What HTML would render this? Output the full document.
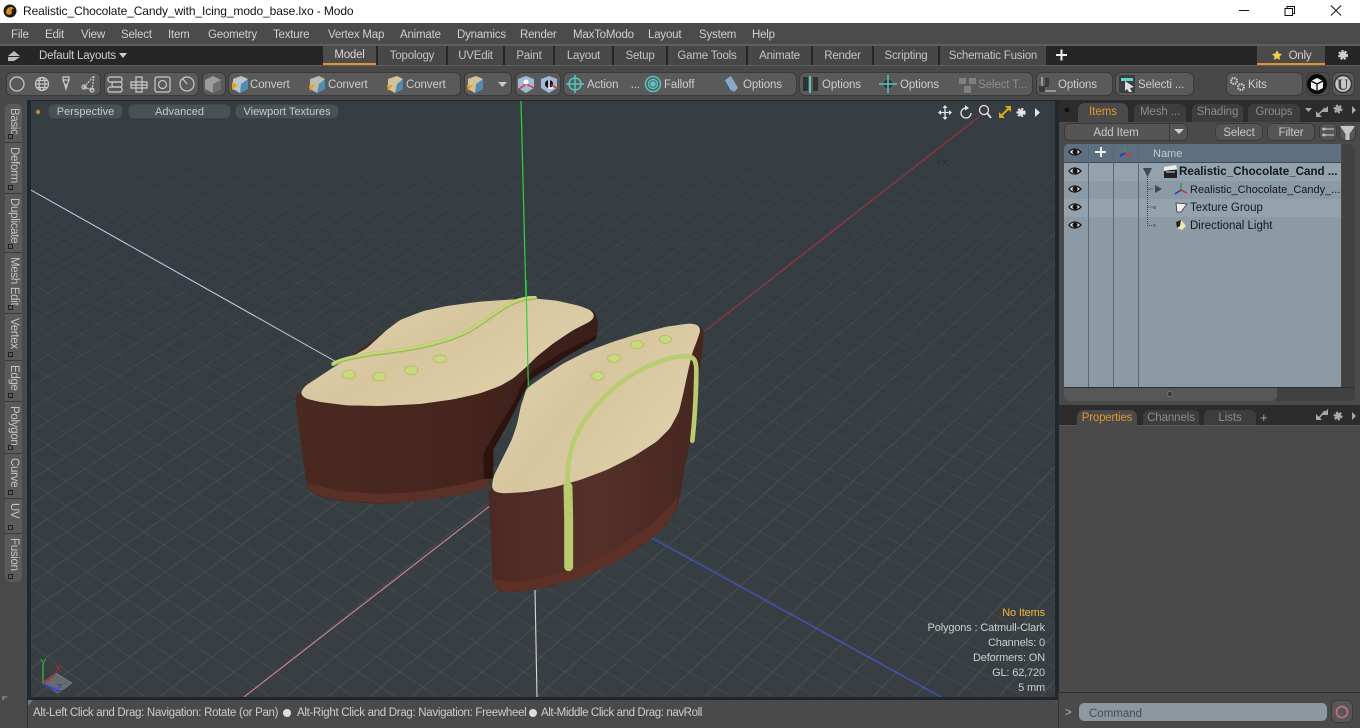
<!DOCTYPE html>
<html><head><meta charset="utf-8"><title>Modo</title>
<style>
html,body{margin:0;padding:0;background:#484848}
body{width:1360px;height:728px;overflow:hidden;position:relative;font-family:"Liberation Sans",sans-serif;font-size:11.5px;color:#c8c8c8}
.b{position:absolute}
.t{position:absolute;white-space:nowrap;line-height:14px}
.g{position:absolute;top:72px;height:22px;background:#5a5a5a;border:1px solid #3a3a3a;border-radius:6px;box-sizing:content-box}
.m{top:27.500px;color:#cfcfcf;letter-spacing:-.2px}
.tab{position:absolute;top:46px;height:19px;background:#474747;text-align:center;line-height:20px;color:#c4c4c4;letter-spacing:-.2px}
.tb{top:78px;color:#cdcdcd;font-size:11.5px;letter-spacing:-.1px}
.side{position:absolute;left:5px;width:17px;background:#5a5a5a;border-bottom:1px solid #3b3b3b}
.side span{position:absolute;left:1px;top:4px;writing-mode:vertical-rl;font-size:11.5px;line-height:15px;color:#c4c4c4;white-space:nowrap;letter-spacing:-.3px}
.side i{position:absolute;left:3px;bottom:3px;width:3px;height:3px;border:1px solid #222}
.pill{position:absolute;top:104px;height:15px;background:#495154;border:1px solid #3f4649;border-radius:6px;text-align:center;line-height:14px;color:#c6c9ca;box-sizing:border-box;font-size:11px}
.rt{position:absolute;height:18px;background:#3d3d3d;border-radius:6px 6px 0 0;text-align:center;line-height:17px;color:#8b8b8b;letter-spacing:-.1px}
.btn{position:absolute;top:123px;height:18px;background:#555;border:1px solid #3a3a3a;border-radius:6px;text-align:center;line-height:18px;box-sizing:border-box;color:#c8c8c8;letter-spacing:-.1px}
.hud{position:absolute;right:315px;white-space:nowrap;line-height:14px;color:#cdd0d1;font-size:11px;letter-spacing:-.15px}
.row{position:absolute;left:1064px;width:277px;height:18px}
.n{position:absolute;white-space:nowrap;color:#15181b;font-size:11.5px;line-height:14px}
.st{top:706px;color:#cdcdcd;letter-spacing:-.3px}
</style></head><body>

<!-- title bar -->
<div class="b" style="left:0;top:0;width:1360px;height:23px;background:#fff"></div>
<div class="t" style="left:23px;top:4px;font-size:12px;color:#111;line-height:15px;letter-spacing:-.1px">Realistic_Chocolate_Candy_with_Icing_modo_base.lxo - Modo</div>

<!-- menu bar -->
<div class="b" style="left:0;top:23px;width:1360px;height:22px;background:#4b4b4b"></div>
<div class="t m" style="left:11px">File</div><div class="t m" style="left:45px">Edit</div><div class="t m" style="left:81px">View</div><div class="t m" style="left:121px">Select</div><div class="t m" style="left:168px">Item</div><div class="t m" style="left:208px">Geometry</div><div class="t m" style="left:273px">Texture</div><div class="t m" style="left:328px">Vertex Map</div><div class="t m" style="left:400px">Animate</div><div class="t m" style="left:457px">Dynamics</div><div class="t m" style="left:520px">Render</div><div class="t m" style="left:573px">MaxToModo</div><div class="t m" style="left:648px">Layout</div><div class="t m" style="left:699px">System</div><div class="t m" style="left:752px">Help</div>

<!-- tab bar -->
<div class="b" style="left:0;top:44px;width:1360px;height:2px;background:#5e5e5e"></div>
<div class="b" style="left:0;top:46px;width:1360px;height:19px;background:#262626"></div>
<div class="t" style="left:39px;top:48.500px;color:#cfcfcf;letter-spacing:-.2px">Default Layouts</div>
<div class="tab" style="left:323px;width:53px;height:17px;line-height:19px;border-bottom:2px solid #e0962c;background:#4d4d4d;color:#d8d8d8">Model</div>
<div class="tab" style="left:378px;width:68px">Topology</div>
<div class="tab" style="left:448px;width:55px">UVEdit</div>
<div class="tab" style="left:505px;width:48px">Paint</div>
<div class="tab" style="left:555px;width:57px">Layout</div>
<div class="tab" style="left:614px;width:52px">Setup</div>
<div class="tab" style="left:668px;width:78px">Game Tools</div>
<div class="tab" style="left:748px;width:63px">Animate</div>
<div class="tab" style="left:813px;width:59px">Render</div>
<div class="tab" style="left:874px;width:64px">Scripting</div>
<div class="tab" style="left:940px;width:106px">Schematic Fusion</div>
<div class="tab" style="left:1257px;width:68px;height:17px;border-bottom:2px solid #e0962c;background:#4a4a4a"><span style="margin-left:18px;color:#d0d0d0">Only</span></div>

<!-- toolbar -->
<div class="b" style="left:0;top:65px;width:1360px;height:35px;background:#484848;border-top:1px solid #5c5c5c;box-sizing:border-box"></div>
<div class="g" style="left:6px;width:93px"></div>
<div class="g" style="left:104px;width:93px"></div>
<div class="g" style="left:202px;width:22px"></div>
<div class="g" style="left:228px;width:231px"></div>
<div class="g" style="left:464px;width:46px"></div>
<div class="g" style="left:515px;width:44px"></div>
<div class="g" style="left:563px;width:232px"></div>
<div class="g" style="left:799px;width:232px"></div>
<div class="g" style="left:1036px;width:75px"></div>
<div class="g" style="left:1115px;width:77px"></div>
<div class="g" style="left:1226px;width:75px"></div>
<div class="g" style="left:1306px;width:22px;background:#4a4a4a"></div>
<div class="g" style="left:1332px;width:21px"></div>
<div class="t tb" style="left:250px">Convert</div><div class="t tb" style="left:328px">Convert</div><div class="t tb" style="left:406px">Convert</div>
<div class="t tb" style="left:587px">Action &nbsp;&nbsp;&nbsp;...</div><div class="t tb" style="left:664px">Falloff</div><div class="t tb" style="left:743px">Options</div>
<div class="t tb" style="left:822px">Options</div><div class="t tb" style="left:900px">Options</div><div class="t tb" style="left:978px;color:#8d8d8d">Select T...</div>
<div class="t tb" style="left:1058px">Options</div><div class="t tb" style="left:1138px">Selecti ...</div><div class="t tb" style="left:1248px">Kits</div>

<!-- left sidebar -->
<div class="b" style="left:0;top:100px;width:27px;height:628px;background:#494949"></div>
<div class="b" style="left:5px;top:104px;width:17px;height:478px;border-radius:5px;overflow:hidden;background:#5a5a5a"></div>
<div class="side" style="top:104px;height:38px;border-radius:5px 5px 0 0"><span>Basic</span><i></i></div>
<div class="side" style="top:143px;height:50px"><span>Deform</span><i></i></div>
<div class="side" style="top:194px;height:58px"><span>Duplicate</span><i></i></div>
<div class="side" style="top:253px;height:60px"><span>Mesh Edit</span><i></i></div>
<div class="side" style="top:314px;height:46px"><span>Vertex</span><i></i></div>
<div class="side" style="top:361px;height:40px"><span>Edge</span><i></i></div>
<div class="side" style="top:402px;height:51px"><span>Polygon</span><i></i></div>
<div class="side" style="top:454px;height:44px"><span>Curve</span><i></i></div>
<div class="side" style="top:499px;height:34px"><span>UV</span><i></i></div>
<div class="side" style="top:534px;height:48px;border-radius:0 0 5px 5px;border:0"><span>Fusion</span><i></i></div>

<!-- viewport frame -->
<div class="b" style="left:27px;top:100px;width:1032px;height:600px;background:#1f292d"></div>

<!-- viewport svg -->
<svg class="b" style="left:31px;top:101px" width="1024" height="596" viewBox="31 101 1024 596">
<defs>
<linearGradient id="vb" x1="0" y1="0" x2="0" y2="1"><stop offset="0" stop-color="#353d42"/><stop offset="1" stop-color="#383e42"/></linearGradient>
<linearGradient id="fade" x1="0" y1="0" x2="0" y2="1"><stop offset="0" stop-color="#353d42" stop-opacity=".9"/><stop offset=".25" stop-color="#353d42" stop-opacity=".5"/><stop offset=".6" stop-color="#353d42" stop-opacity=".1"/><stop offset="1" stop-color="#353d42" stop-opacity="0"/></linearGradient>
<filter id="sm" x="-5%" y="-5%" width="110%" height="110%" color-interpolation-filters="sRGB"><feGaussianBlur stdDeviation="7"/><feComponentTransfer><feFuncA type="linear" slope="14" intercept="-6.500"/></feComponentTransfer></filter>
<line id="r0" x1="2800" y1="-1330" x2="-1146" y2="700"/>
<g id="r1"><use href="#r0"/><use href="#r0" transform="matrix(1 0 .02069 1 27.52 0)"/></g>
<g id="r2"><use href="#r1"/><use href="#r1" transform="matrix(1 0 .04138 1 55.03 0)"/></g>
<g id="r3"><use href="#r2"/><use href="#r2" transform="matrix(1 0 .08276 1 110.06 0)"/></g>
<g id="r4"><use href="#r3"/><use href="#r3" transform="matrix(1 0 .16552 1 220.12 0)"/></g>
<g id="r5"><use href="#r4"/><use href="#r4" transform="matrix(1 0 .33103 1 440.25 0)"/></g>
<g id="r6"><use href="#r5"/><use href="#r5" transform="matrix(1 0 .66207 1 880.49 0)"/></g>
<line id="l0" x1="-2700" y1="-1330" x2="23" y2="700"/>
<g id="l1"><use href="#l0"/><use href="#l0" transform="matrix(1 0 .02069 1 27.52 0)"/></g>
<g id="l2"><use href="#l1"/><use href="#l1" transform="matrix(1 0 .04138 1 55.03 0)"/></g>
<g id="l3"><use href="#l2"/><use href="#l2" transform="matrix(1 0 .08276 1 110.06 0)"/></g>
<g id="l4"><use href="#l3"/><use href="#l3" transform="matrix(1 0 .16552 1 220.12 0)"/></g>
<g id="l5"><use href="#l4"/><use href="#l4" transform="matrix(1 0 .33103 1 440.25 0)"/></g>
<g id="l6"><use href="#l5"/><use href="#l5" transform="matrix(1 0 .66207 1 880.49 0)"/></g>
<linearGradient id="cr" x1="0" y1="0" x2="1" y2=".6"><stop offset="0" stop-color="#e4d8b6"/><stop offset=".5" stop-color="#d6c59d"/><stop offset="1" stop-color="#dfd1ac"/></linearGradient>
<linearGradient id="br" x1="0" y1="0" x2="1" y2="0"><stop offset="0" stop-color="#4a2921"/><stop offset=".5" stop-color="#46251e"/><stop offset="1" stop-color="#3a1e18"/></linearGradient>
<linearGradient id="br2" x1="0" y1="0" x2="1" y2="0"><stop offset="0" stop-color="#4c2a23"/><stop offset=".5" stop-color="#543029"/><stop offset="1" stop-color="#46261f"/></linearGradient>
</defs>
<rect x="31" y="101" width="1024" height="596" fill="url(#vb)"/>
<g stroke="#fff" stroke-opacity=".065" stroke-width="1" fill="none"><use href="#r6"/><use href="#l6"/></g>
<rect x="31" y="101" width="1024" height="596" fill="url(#fade)"/>

<!-- axes -->
<line x1="521" y1="101" x2="526" y2="300" stroke="#2fd23a" stroke-width="1.200"/>
<line x1="535" y1="590" x2="537" y2="697" stroke="#d8d8d8" stroke-width="1.100"/>
<line x1="31" y1="190" x2="340" y2="364" stroke="#c6cbe6" stroke-width="1"/>
<line x1="650" y1="537" x2="941" y2="697" stroke="#3f55d8" stroke-width="1.100"/>
<line x1="705" y1="331" x2="980" y2="116" stroke="#a8303a" stroke-width="1.100"/>
<line x1="244" y1="697" x2="495" y2="502" stroke="#d68a90" stroke-width="1"/>
<text x="936" y="166" font-size="10" fill="#2c3337" font-family="Liberation Sans">+X</text>

<!-- candy -->
<g transform="translate(280 280) scale(.33333)" stroke-linejoin="round">
<!-- left body -->
<path filter="url(#sm)" d="M45 345L60 338L110 295L205 235L320 150L430 93L600 65L760 55L900 78L945 95L953 120L953 165L945 180L850 235L750 290L720 340L700 400L640 480L610 520L612 597L630 590L628 620L540 645L400 665L300 672L200 665L120 650L88 635L80 610L65 510Z" fill="url(#br)"/>
<path d="M82 612L200 635L300 642L420 635L540 615L628 592L626 620L540 645L400 665L300 670L200 663L120 648L88 633Z" fill="#5a3027"/>
<path d="M953 165L945 180L850 235L750 300L720 360L690 420L640 510L640 595L612 597L610 520L650 450L700 370L725 315L760 270L850 215Z" fill="#2c130e"/>
<!-- left top -->
<path filter="url(#sm)" d="M60 340L75 318L110 295L160 262L205 235L260 205L320 150L360 120L430 93L500 78L600 65L700 58L760 55L830 62L900 78L935 92L945 110L930 125L880 150L820 190L770 230L740 260L700 295L660 318L600 340L520 358L420 372L300 378L200 376L120 366L75 355Z" fill="url(#cr)"/>
<!-- right body -->
<path filter="url(#sm)" d="M625 632L632 760L638 895L640 920L665 938L720 935L800 922L900 895L1000 850L1090 795L1150 745L1190 690L1205 620L1215 560L1232 480L1245 400L1255 320L1265 230L1272 150L1262 140L1230 130L635 625Z" fill="url(#br2)"/>
<path d="M640 900L720 905L800 890L900 860L1000 810L1100 745L1170 680L1193 652L1188 688L1150 743L1090 793L1000 848L900 893L800 920L720 933L665 936L641 918Z" fill="#5c3027"/>
<!-- right top -->
<path filter="url(#sm)" d="M635 625L640 590L665 540L695 480L712 430L722 380L740 325L790 290L850 250L920 215L1000 185L1080 160L1160 140L1230 130L1255 135L1262 150L1250 185L1238 215L1225 270L1210 340L1197 395L1170 445L1130 485L1060 530L980 570L900 600L820 622L740 636L670 640L645 636Z" fill="url(#cr)"/>
<!-- icing -->
<path d="M160 252C190 235 250 225 310 218C390 208 470 195 540 165C600 140 650 90 700 68C725 56 745 54 765 54" fill="none" stroke="#a4b864" stroke-width="13" stroke-linecap="round"/>
<path d="M160 250C190 233 250 223 310 216C390 206 470 193 540 163C600 138 650 88 700 66C725 54 745 52 765 52" fill="none" stroke="#c4d67c" stroke-width="8" stroke-linecap="round"/>
<path d="M866 860V720L864 620" fill="none" stroke="#b7ca6e" stroke-width="27" stroke-linecap="round"/>
<path d="M864 620C858 550 872 490 905 435C935 385 990 325 1060 282C1120 247 1170 230 1215 228C1245 228 1250 245 1249 280C1248 340 1244 420 1237 482" fill="none" stroke="#b9cc72" stroke-width="14" stroke-linecap="round"/>
<!-- dots -->
<g fill="#c8d97e" stroke="#a3b860" stroke-width="2">
<ellipse cx="207" cy="284" rx="20" ry="13"/><ellipse cx="298" cy="290" rx="20" ry="13"/><ellipse cx="394" cy="271" rx="20" ry="13"/><ellipse cx="480" cy="237" rx="19" ry="12"/>
<ellipse cx="954" cy="288" rx="19" ry="13"/><ellipse cx="1002" cy="235" rx="19" ry="12"/><ellipse cx="1071" cy="194" rx="19" ry="12"/><ellipse cx="1156" cy="178" rx="18" ry="12"/>
</g>
<line x1="738" y1="0" x2="745" y2="318" stroke="#2fd23a" stroke-width="3.500"/>
</g>

<!-- gizmo -->
<path d="M56 673L72 683L58 693L43 683Z" fill="#6d7376" stroke="#8d9396" stroke-width=".7" opacity=".85"/>
<line x1="43" y1="684" x2="43" y2="665" stroke="#2bb84a" stroke-width="1.300"/>
<line x1="43" y1="684" x2="56" y2="674" stroke="#b53030" stroke-width="1.600"/>
<line x1="43" y1="684" x2="60" y2="692" stroke="#2f3fd0" stroke-width="1.600"/>
<g font-family="Liberation Sans" font-size="10"><text x="40" y="666" fill="#2bb84a">Y</text><text x="55" y="672" fill="#b53030">X</text><text x="56" y="691" fill="#2f3fd0">Z</text></g>

<!-- viewport icons -->
<g fill="none" stroke="#e6e6e6" stroke-width="1.300">
<path d="M945 107V118M939.500 112.500H950.500"/>
<path d="M945 105L942.500 108H947.500ZM945 120L942.500 117H947.500ZM938 112.500L941 110V115ZM952 112.500L949 110V115Z" fill="#e6e6e6" stroke="none"/>
<path d="M971 113A5 5 0 1 1 966 108"/><path d="M965 105L969 108L965 110.500Z" fill="#e6e6e6" stroke="none"/>
<circle cx="984" cy="110" r="4.500"/><path d="M987.500 113.500L991 118" stroke-width="1.800"/>
<path d="M1000 117L1010 107" stroke="#d9a81f" stroke-width="2"/><path d="M999 112V118H1005ZM1011 112V106H1005Z" fill="#d9a81f" stroke="none"/>
<circle cx="1021" cy="112.500" r="3" fill="#e6e6e6" stroke-width="3.200" stroke-dasharray="1.700 1.100"/>
<path d="M1035 108L1040 112.500L1035 117Z" fill="#e6e6e6" stroke="none"/>
</g>
<circle cx="38" cy="112" r="2.200" fill="#c08a2c"/>
</svg>

<!-- viewport pills -->
<div class="pill" style="left:48px;width:75px">Perspective</div>
<div class="pill" style="left:128px;width:103px">Advanced</div>
<div class="pill" style="left:235px;width:104px">Viewport Textures</div>

<!-- HUD -->
<div class="hud" style="top:606px;color:#f0b93c">No Items</div>
<div class="hud" style="top:621px">Polygons : Catmull-Clark</div>
<div class="hud" style="top:636px">Channels: 0</div>
<div class="hud" style="top:651px">Deformers: ON</div>
<div class="hud" style="top:666px">GL: 62,720</div>
<div class="hud" style="top:681px">5 mm</div>

<!-- status bar -->
<div class="b" style="left:27px;top:700px;width:1032px;height:28px;background:#4a4a4a;border-left:1px solid #333;box-sizing:border-box"></div>
<div class="t st" style="left:33px">Alt-Left Click and Drag: Navigation: Rotate (or Pan)</div>
<div class="b" style="left:283px;top:709px;width:8px;height:8px;border-radius:50%;background:#ddd"></div>
<div class="t st" style="left:297px">Alt-Right Click and Drag: Navigation: Freewheel</div>
<div class="b" style="left:529px;top:709px;width:8px;height:8px;border-radius:50%;background:#ddd"></div>
<div class="t st" style="left:541px;letter-spacing:-.4px">Alt-Middle Click and Drag: navRoll</div>

<!-- right panel -->
<div class="b" style="left:1059px;top:100px;width:301px;height:628px;background:#4a4a4a"></div>
<div class="b" style="left:1059px;top:100px;width:301px;height:22px;background:#2c2c2c"></div>
<div class="b" style="left:1078px;top:103px;width:50px;height:19px;background:#4a4a4a;border-radius:7px 7px 0 0;text-align:center;line-height:18px;color:#e0962c">Items</div>
<div class="rt" style="left:1134px;top:104px;width:52px">Mesh ...</div>
<div class="rt" style="left:1192px;top:104px;width:51px">Shading</div>
<div class="rt" style="left:1248px;top:104px;width:52px">Groups</div>
<div class="btn" style="left:1064px;width:124px;border-radius:6px;padding-right:20px">Add Item</div>
<div class="btn" style="left:1215px;width:48px">Select</div>
<div class="btn" style="left:1267px;width:48px">Filter</div>
<div class="btn" style="left:1319px;width:18px"></div>
<div class="btn" style="left:1339px;width:17px"></div>
<div class="b" style="left:1169px;top:124px;width:1px;height:16px;background:#3a3a3a"></div>

<!-- table -->
<div class="b" style="left:1342px;top:144px;width:13px;height:257px;background:#414141;border-radius:0 5px 5px 0"></div>
<div class="b" style="left:1064px;top:144px;width:277px;height:243px;background:#8c9aa6;border-radius:5px 0 0 0"></div>
<div class="b" style="left:1064px;top:144px;width:277px;height:19px;background:#5e6f7f;border-bottom:1px solid #3f4a54;box-sizing:border-box;border-radius:5px 0 0 0"></div>
<div class="row" style="top:163px;height:18px;background:#94a2ad"></div>
<div class="row" style="top:199px;height:18px;background:#94a2ad"></div>
<div class="b" style="left:1088px;top:144px;width:1px;height:243px;background:#5b6874"></div>
<div class="b" style="left:1113px;top:144px;width:1px;height:243px;background:#5b6874"></div>
<div class="b" style="left:1138px;top:144px;width:1px;height:243px;background:#5b6874"></div>
<div class="b" style="left:1064px;top:387px;width:291px;height:14px;background:#414141;border-top:1px solid #2e2e2e;box-sizing:border-box;border-radius:0 0 5px 5px"></div>
<div class="b" style="left:1064px;top:388px;width:213px;height:13px;background:#575757;border-radius:0 0 5px 5px"></div>
<div class="t" style="left:1153px;top:147px;color:#c3ccd3;font-size:11px">Name</div>
<div class="n" style="left:1179px;top:165px;font-weight:bold;font-size:11.600px">Realistic_Chocolate_Cand ...</div>
<div class="n" style="left:1190px;top:183px;font-size:11px">Realistic_Chocolate_Candy_...</div>
<div class="n" style="left:1190px;top:201px">Texture Group</div>
<div class="n" style="left:1190px;top:219px">Directional Light</div>

<!-- properties panel -->
<div class="b" style="left:1059px;top:405px;width:301px;height:20px;background:#2c2c2c"></div>
<div class="b" style="left:1059px;top:425px;width:301px;height:1px;background:#5a5a5a"></div>
<div class="b" style="left:1077px;top:410px;width:60px;height:16px;background:#4a4a4a;border-radius:7px 7px 0 0;text-align:center;line-height:17px;color:#e0962c;letter-spacing:-.2px">Properties</div>
<div class="rt" style="left:1143px;top:410px;width:56px;height:15px;line-height:17px">Channels</div>
<div class="rt" style="left:1204px;top:410px;width:52px;height:15px;line-height:17px">Lists</div>
<div class="t" style="left:1260px;top:411px;color:#a5a5a5;font-size:13px">+</div>

<!-- command -->
<div class="b" style="left:1059px;top:692px;width:301px;height:1px;background:#2d2d2d"></div>
<div class="b" style="left:1058px;top:692px;width:1px;height:36px;background:#333"></div>
<div class="t" style="left:1065px;top:706px;color:#b5b5b5">&gt;</div>
<div class="b" style="left:1079px;top:703px;width:248px;height:18px;background:#8d979f;border-radius:5px"></div>
<div class="t" style="left:1089px;top:707px;color:#444d54;font-size:11.500px">Command</div>
<div class="b" style="left:1331px;top:700px;width:22px;height:23px;background:#575757;border:1px solid #3c3c3c;border-radius:6px;box-sizing:border-box"></div>

<!-- chrome icon overlay -->
<svg class="b" style="left:0;top:0;pointer-events:none" width="1360" height="728" viewBox="0 0 1360 728">
<circle cx="10" cy="11" r="6.500" fill="#1d1a14"/><path d="M6 12C7 6 13 6 14 9C12 8 11 10 12 13C10 16 6 15 6 12Z" fill="#d68f1f"/>
<g stroke="#111" stroke-width="1" fill="none"><path d="M1239 10.500H1249"/><path d="M1285 8.500H1292.500V15.500H1285ZM1287 8.500V6.500H1294.500V13.500H1292.500"/><path d="M1331 5.500L1341 15.500M1341 5.500L1331 15.500"/></g>
<path d="M14 51L20 56H8ZM8 57H20L14 61H8Z" fill="#bdbdbd"/><path d="M119 53H127L123 58Z" fill="#cfcfcf"/>
<path d="M1056 55H1067M1061.500 49.500V60.500" stroke="#eee" stroke-width="2"/>
<path d="M1277 50L1278.500 53.500L1282 54L1279.500 56.500L1280 60L1277 58.300L1274 60L1274.500 56.500L1272 54L1275.500 53.500Z" fill="#f1cf4a"/>
<circle cx="1343" cy="55" r="3.500" fill="#cfcfcf" stroke="#cfcfcf" stroke-width="3" stroke-dasharray="1.800 1.200"/>
<g fill="none" stroke="#c9c9c9" stroke-width="1.200">
<circle cx="17" cy="84" r="7"/>
<circle cx="42" cy="84" r="6.500"/><ellipse cx="42" cy="84" rx="3" ry="6.500"/><path d="M35.500 84H48.500M36.500 80.500H47.500M36.500 87.500H47.500"/>
<path d="M63 77H69V80L67.500 84L66 89L64.500 84L63 80ZM63 80H69M66 84V89"/>
<path d="M84 87L94 76L92 90ZM84 87L92 90" stroke-dasharray="2 1"/><circle cx="84" cy="87" r="2"/><circle cx="92" cy="90" r="2"/>
<rect x="108" y="77" width="14" height="5" rx="2"/><rect x="112" y="82" width="10" height="5" rx="2"/><rect x="108" y="87" width="14" height="5" rx="2"/>
<path d="M136 77H142V82H147V88H142V92H136V88H131V82H136Z"/><path d="M136 82V88H142V82ZM131 85H147"/>
<rect x="155" y="77" width="15" height="15" rx="2"/><circle cx="162.500" cy="84.500" r="4"/>
<circle cx="187" cy="84" r="7"/><path d="M187 84L183 79"/>
</g>
<path d="M213 76L221 80V89L213 93L205 89V80Z" fill="#9b9b9b"/><path d="M213 84L221 80V89L213 93Z" fill="#6e6e6e"/>
<path d="M241 76L248 79V89L240 93L233 89V79Z" fill="#b7c6cf"/><path d="M241 84L248 79V89L240 93Z" fill="#4f8db3"/><path d="M232 82L238 85L232 90Z" fill="#e5a325"/>
<path d="M319 76L325 79V89L317 93L310 89V79Z" fill="#bcbcae"/><path d="M319 84L325 79V89L317 93Z" fill="#4f8db3"/><path d="M309 85L315 85L310 91Z" fill="#e5a325"/>
<path d="M397 76L403 79V89L395 93L388 89V79Z" fill="#d2c39a"/><path d="M397 84L403 79V89L395 93Z" fill="#4f8db3"/><path d="M387 85L393 85L388 91Z" fill="#e5a325"/>
<path d="M476 76L483 79V89L475 93L468 89V79Z" fill="#d2c39a"/><path d="M476 84L483 79V89L475 93Z" fill="#4f8db3"/><path d="M467 85L473 85L468 91Z" fill="#e5a325"/>
<path d="M498 82H507L502.500 87Z" fill="#c9c9c9"/>
<path d="M526 76L534 79V88L526 93L518 88V79Z" fill="#9fbad8"/><path d="M526 84L534 88M526 84L519 89" stroke="#d33" stroke-width="1.500"/><circle cx="526" cy="82" r="2.500" fill="#fff"/>
<path d="M549 76L557 79V88L549 93L541 88V79Z" fill="#9fbad8"/><circle cx="549" cy="84" r="4" fill="#111"/><path d="M549 80V88H553" stroke="#fff" stroke-width="1.500" fill="none"/><path d="M551 85L557 88" stroke="#d33" stroke-width="1.500"/>
<g fill="none" stroke="#58c5c0" stroke-width="1.500">
<circle cx="575" cy="84" r="6"/><path d="M575 75V93M566 84H584"/>
<circle cx="653" cy="84" r="7.500"/><circle cx="653" cy="84" r="4.500"/><circle cx="653" cy="84" r="2" fill="#58c5c0"/>
</g>
<path d="M803 77H808V91H803ZM813 77H818V91H813Z" fill="#2e3235"/><path d="M810 76V93" stroke="#58c5c0" stroke-width="2"/><circle cx="888" cy="84" r="4.500" fill="#2e3235"/><path d="M888 75V93M879 84H897" stroke="#58c5c0" stroke-width="1.500"/>
<path d="M725 80L731 76L738 88L734 92L730 90Z" fill="#8aa9c8"/><path d="M725 81L731 91L736 92L729 90Z" fill="#1e5a88"/>
<g fill="#7f7f7f"><path d="M959 78H966V84H959ZM969 78H976V84H969ZM964 86H971V93H964Z"/></g>
<path d="M1042 77V91H1056" stroke="#d0d0d0" fill="none"/><rect x="1045" y="78" width="4" height="9" fill="#3a3a3a"/><rect x="1039" y="86" width="6" height="6" fill="#3a3a3a"/>
<rect x="1119" y="75" width="16" height="18" fill="#3d3d3d"/><path d="M1121 78H1133V81H1121Z" fill="#5cd4d4"/><path d="M1125 81L1134 87L1130 88L1132 92L1129 92L1127 89L1125 91Z" fill="#ddd"/>
<circle cx="1234" cy="81" r="3" fill="none" stroke="#cfcfcf" stroke-width="2" stroke-dasharray="1.500 .8"/><circle cx="1241" cy="87" r="3" fill="none" stroke="#cfcfcf" stroke-width="2" stroke-dasharray="1.500 .8"/>
<circle cx="1317" cy="84" r="10" fill="#0a0a0a"/><path d="M1317 78L1323 81V88L1317 91L1311 88V81Z" fill="#f2f2f2"/><path d="M1317 84V91M1317 84L1311 81M1317 84L1323 81" stroke="#0a0a0a" stroke-width="1.300"/>
<circle cx="1343" cy="84" r="8.500" fill="#c8c8c8" stroke="#333" stroke-width="1.500"/><text x="1337" y="90" font-family="Liberation Serif" font-size="16" font-weight="bold" fill="#444">U</text>
<circle cx="1067" cy="110" r="2.500" fill="#111"/>
<g fill="#a9a9a9">
<path d="M1305 108H1312L1308.500 112Z"/><path d="M1316 111V117H1322ZM1328 106V112H1322Z"/><path d="M1318 115L1325 108" stroke="#a9a9a9" stroke-width="1.500"/>
<path d="M1352 106L1356 110L1352 114Z"/>
<path d="M1316 414V420H1322ZM1328 409V415H1322Z"/><path d="M1319 418L1325 411" stroke="#a9a9a9" stroke-width="1.500"/>
<path d="M1352 412L1356 416L1352 420Z"/>
</g>
<circle cx="1338" cy="109" r="3" fill="#a9a9a9" stroke="#a9a9a9" stroke-width="3" stroke-dasharray="1.800 1.200"/>
<circle cx="1338" cy="416" r="3" fill="#a9a9a9" stroke="#a9a9a9" stroke-width="3" stroke-dasharray="1.800 1.200"/>
<circle cx="1170" cy="394" r="2.800" fill="#3c3c3c" stroke="#777" stroke-width=".8"/>
<path d="M1174 129H1184L1179 134Z" fill="#cfcfcf"/>
<path d="M1322 129H1334M1322 135H1334" stroke="#bbb" stroke-width="1.300"/><circle cx="1324" cy="129" r="1.500" fill="#bbb"/><circle cx="1324" cy="135" r="1.500" fill="#bbb"/>
<path d="M1340 126H1355L1349.500 134V140H1345.500V134Z" fill="#c5c5c5"/>
<path d="M1069 152C1072 148 1077 148 1081 152C1077 156 1072 156 1069 152Z" fill="#ddd" stroke="#111" stroke-width="1.300"/><circle cx="1075" cy="152" r="2.500" fill="#111"/>
<path d="M1069 171C1072 167 1077 167 1081 171C1077 175 1072 175 1069 171Z" fill="#ddd" stroke="#111" stroke-width="1.300"/><circle cx="1075" cy="171" r="2.500" fill="#111"/>
<path d="M1069 189C1072 185 1077 185 1081 189C1077 193 1072 193 1069 189Z" fill="#ddd" stroke="#111" stroke-width="1.300"/><circle cx="1075" cy="189" r="2.500" fill="#111"/>
<path d="M1069 207C1072 203 1077 203 1081 207C1077 211 1072 211 1069 207Z" fill="#ddd" stroke="#111" stroke-width="1.300"/><circle cx="1075" cy="207" r="2.500" fill="#111"/>
<path d="M1069 225C1072 221 1077 221 1081 225C1077 229 1072 229 1069 225Z" fill="#ddd" stroke="#111" stroke-width="1.300"/><circle cx="1075" cy="225" r="2.500" fill="#111"/>
<path d="M1101 147V157M1095 152H1106" stroke="#eee" stroke-width="2"/>
<path d="M1125 147V153" stroke="#2f9e4a" stroke-width="2"/><path d="M1125 153L1130 156" stroke="#d33" stroke-width="2"/><path d="M1125 153L1120 156" stroke="#2b3fc0" stroke-width="2"/>
<path d="M1143 168H1152L1147.500 177Z" fill="#3d4b57"/>
<path d="M1147.500 177V225.500H1155M1147.500 189H1153M1147.500 207H1155" stroke="#39444e" stroke-dasharray="1 1" fill="none"/>
<path d="M1155 185L1162 189L1155 193Z" fill="#3d4b57"/>
<rect x="1153" y="206" width="3" height="3" fill="#6d7a85"/><rect x="1153" y="224" width="3" height="3" fill="#6d7a85"/>
<path d="M1164 170H1177V178H1164Z" fill="#222"/><path d="M1164 167L1176 165L1177 169L1164 171Z" fill="#eee"/><path d="M1166 172H1175" stroke="#ddd"/>
<path d="M1181 183V190" stroke="#2f9e4a" stroke-width="1.600"/><path d="M1181 190L1187 193" stroke="#d33" stroke-width="1.600"/><path d="M1181 190L1175 194" stroke="#2b3fc0" stroke-width="1.600"/>
<path d="M1176 203L1187 204L1181 212L1177 212Z" fill="#f0f0f0" stroke="#333" stroke-width=".8"/>
<path d="M1176 222L1181 220L1186 226L1182 230L1177 228Z" fill="#efe7b0"/><path d="M1176 222L1181 220L1180 226L1177 228Z" fill="#222"/>
<path d="M28 700V706L33 700Z" fill="#777"/><path d="M2 696L8 696L2 701Z" fill="#777"/>
<circle cx="1342" cy="712" r="5.500" fill="none" stroke="#b8727a" stroke-width="1.800"/>
</svg>
</body></html>
